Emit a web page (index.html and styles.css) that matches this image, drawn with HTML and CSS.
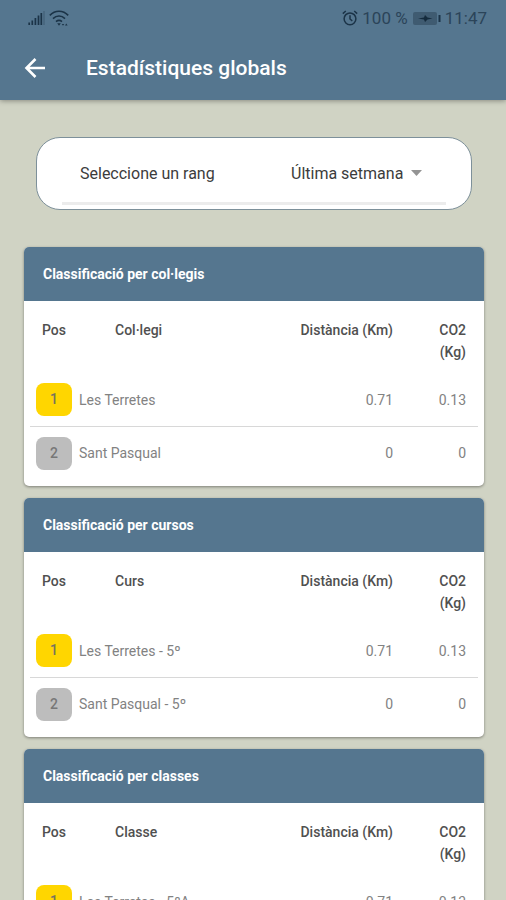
FILE: index.html
```html
<!DOCTYPE html>
<html lang="ca">
<head>
<meta charset="utf-8">
<meta name="viewport" content="width=device-width, initial-scale=1">
<title>Estadístiques globals</title>
<link rel="stylesheet" href="styles.css">
</head>
<body>
<header class="app-bar">
  <div class="status">
    <div class="status-group">
      <svg class="signal" width="17" height="16" viewBox="0 0 17 16" aria-hidden="true"><path d="M1.2 15v-2.500M4.300 15v-4.500M7.400 15V8M10.500 15V5.500M13.300 15V3" stroke="#1b3347" stroke-width="1.700"/><path d="M16 15V1" stroke="#46647b" stroke-width="1.500"/></svg>
      <svg class="wifi" width="20" height="17" viewBox="0 0 20 17" fill="none" stroke="#1b3347" aria-hidden="true"><path d="M.8 5.400C6-.2 14-.2 19.200 5.400M4 8.600c3.500-3.400 8.500-3.400 12 0M7 11.600c2-1.700 4-1.700 6 0" stroke-width="1.600"/><path d="M8.200 13.200h3.600L10 15.800zM12.800 14l1.200 1.800 1.200-1.800zM16 15.500l1.300-2 1.300 2z" fill="#1b3347" stroke="none"/></svg>
    </div>
    <div class="status-group">
      <svg class="alarm" width="16" height="16" viewBox="0 0 16 16" fill="none" stroke="#1b3347" stroke-width="1.500" aria-hidden="true"><circle cx="8" cy="8.800" r="5.900"/><path d="M8 5.300v3.700l2.300 1.800M.8 3.600l3-2.600M15.200 3.600l-3-2.600"/></svg>
      <span>100 %</span>
      <svg class="battery" width="29" height="15" viewBox="0 0 29 15" aria-hidden="true"><rect x="1" y="1" width="24" height="13" rx="2" fill="#3f5b71"/><path d="M6 7.500l6-1 1-2.500 2.500 2.500 5 1-5 1L13 11l-1-2.500z" fill="#142b3d"/><path d="M27.500 4v7" stroke="#1b3347" stroke-width="2"/></svg>
      <span>11:47</span>
    </div>
  </div>
  <div class="title-row">
    <button class="back" type="button" aria-label="Enrere"><svg width="22" height="20" viewBox="0 0 22 20" fill="none" stroke="#fff" stroke-width="2.600" aria-hidden="true"><path d="M21 10H2.500M11.500 1L2.500 10l9 9"/></svg></button>
    <h1>Estadístiques globals</h1>
  </div>
</header>
<main class="content">
  <div class="range">
    <div class="range-field">
      <label for="rang">Seleccione un rang</label>
      <div class="select-wrap">
        <select id="rang"><option>Última setmana</option></select>
        <svg width="11" height="6" viewBox="0 0 11 6" aria-hidden="true"><path d="M0 0h11L5.500 6z" fill="#949494"/></svg>
      </div>
    </div>
  </div>
  <section class="card">
    <h2>Classificació per col·legis</h2>
    <table>
      <thead><tr><th class="pos">Pos</th><th class="name">Col·legi</th><th class="dist">Distància (Km)</th><th class="co">CO2 (Kg)</th></tr></thead>
      <tbody>
        <tr><td class="pos"><span class="badge gold">1</span></td><td>Les Terretes</td><td class="dist">0.71</td><td class="co">0.13</td></tr>
        <tr><td class="pos"><span class="badge silver">2</span></td><td>Sant Pasqual</td><td class="dist">0</td><td class="co">0</td></tr>
      </tbody>
    </table>
  </section>
  <section class="card">
    <h2>Classificació per cursos</h2>
    <table>
      <thead><tr><th class="pos">Pos</th><th class="name">Curs</th><th class="dist">Distància (Km)</th><th class="co">CO2 (Kg)</th></tr></thead>
      <tbody>
        <tr><td class="pos"><span class="badge gold">1</span></td><td>Les Terretes - 5º</td><td class="dist">0.71</td><td class="co">0.13</td></tr>
        <tr><td class="pos"><span class="badge silver">2</span></td><td>Sant Pasqual - 5º</td><td class="dist">0</td><td class="co">0</td></tr>
      </tbody>
    </table>
  </section>
  <section class="card">
    <h2>Classificació per classes</h2>
    <table>
      <thead><tr><th class="pos">Pos</th><th class="name">Classe</th><th class="dist">Distància (Km)</th><th class="co">CO2 (Kg)</th></tr></thead>
      <tbody>
        <tr><td class="pos"><span class="badge gold">1</span></td><td>Les Terretes - 5ºA</td><td class="dist">0.71</td><td class="co">0.13</td></tr>
      </tbody>
    </table>
  </section>
</main>
</body>
</html>
```
FILE: styles.css
```css
* { box-sizing: border-box; }
body {
  margin: 0;
  height: 100vh;
  display: flex;
  flex-direction: column;
  overflow: hidden;
  background: #d0d3c4;
  color: #3c3c3c;
  font-family: Roboto, "Noto Sans", sans-serif;
  font-size: 14px;
}
.app-bar {
  flex: none;
  position: relative;
  background: #55768f;
  box-shadow: 0 1px 5px rgba(0, 0, 0, .35);
}
.status {
  display: flex;
  justify-content: space-between;
  height: 36px;
  padding: 0 19px 0 28px;
  color: #2b4459;
  font-size: 17px;
}
.status-group { display: flex; align-items: center; gap: 4px; }
.title-row { display: flex; align-items: center; height: 64px; padding: 0 24px; gap: 40px; }
.back { display: flex; padding: 0; border: 0; background: none; }
h1 { margin: 0; color: #fff; font-size: 21px; font-weight: 500; }
.content { flex: 1; min-height: 0; overflow-y: auto; scrollbar-width: none; padding: 37px 22px 12px 24px; }
.range {
  margin: 0 12px 37px;
  padding: 0 25px;
  height: 73px;
  border: 1px solid #7d909a;
  border-radius: 24px;
  background: #fff;
}
.range-field {
  display: flex;
  align-items: center;
  justify-content: space-between;
  height: 67px;
  padding: 6px 24px 0 18px;
  border-bottom: 3px solid #ececec;
  font-size: 16px;
}
.select-wrap { display: flex; align-items: center; gap: 7px; }
select {
  appearance: none;
  padding: 0;
  border: 0;
  background: none;
  color: inherit;
  font: inherit;
}
.card {
  margin-bottom: 12px;
  padding-bottom: 7px;
  border-radius: 5px;
  background: #fff;
  box-shadow: 0 1px 3px rgba(0, 0, 0, .4);
}
h2 {
  margin: 0;
  padding: 0 19px;
  border-radius: 5px 5px 0 0;
  background: #55768f;
  color: #fff;
  font-size: 14px;
  font-weight: 700;
  line-height: 54px;
}
table { width: calc(100% - 12px); margin: 0 6px; border-collapse: separate; border-spacing: 0; table-layout: fixed; }
th { padding: 18px 0 10px; color: #505050; font-weight: 500; line-height: 22px; text-align: left; vertical-align: top; }
td { height: 53px; padding: 0; color: #828282; }
tbody tr + tr td { border-top: 1px solid #d8d8d8; }
.pos { width: 49px; }
th.pos { padding-left: 12px; }
td.pos { padding-left: 6px; }
th.name { padding-left: 36px; }
.dist { width: 100px; text-align: right; }
.co { width: 85px; padding-left: 44px; padding-right: 12px; text-align: right; }
.badge { display: block; width: 36px; border-radius: 8px; color: #77725f; font-weight: 500; line-height: 33px; text-align: center; }
.gold { background: #ffd600; }
.silver { background: #bdbdbd; color: #777; }
```
